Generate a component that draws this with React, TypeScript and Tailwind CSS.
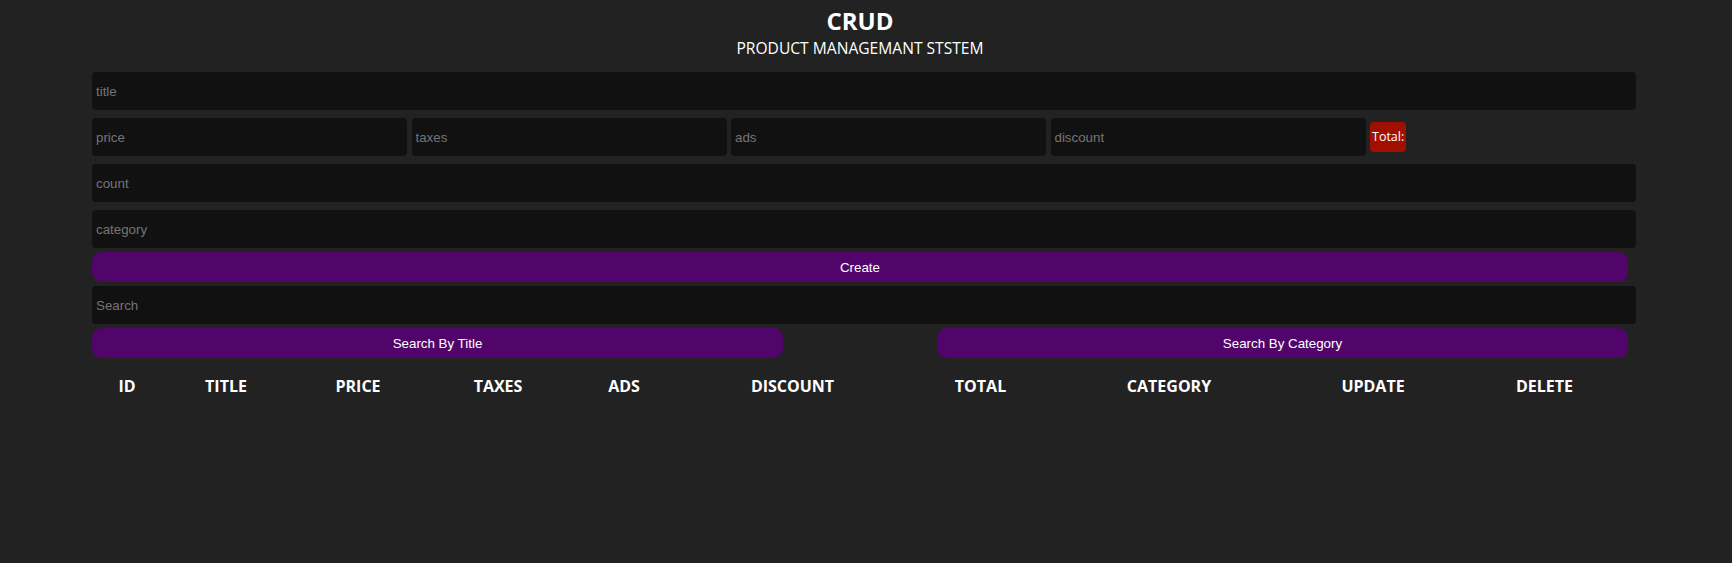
import React from "react";

const heads = ["ID", "TITLE", "PRICE", "TAXES", "ADS", "DISCOUNT", "TOTAL", "CATEGORY", "UPDATE", "DELETE"];

const inputCls =
  "h-[38px] rounded-[4px] bg-[#111111] px-[4px] text-[13.33px] text-white outline-none placeholder:text-[#757575] [font-family:'Liberation_Sans',Arial,sans-serif]";

const btnCls =
  "h-[30px] rounded-[10px] bg-[#51056b] pt-[1px] text-[13.33px] text-white [font-family:'Liberation_Sans',Arial,sans-serif]";

export default function App() {
  return (
    <div className="min-h-screen bg-[#222222] text-white [font-family:'Open_Sans',sans-serif]">
      <div className="ml-[92px] flex w-[1536px] flex-col">
        <div className="flex flex-col items-center pt-[5px]">
          <h2 className="text-[24px] font-bold leading-[32px]">CRUD</h2>
          <p className="mt-[1px] text-[15.6px] leading-[20px]">PRODUCT MANAGEMANT STSTEM</p>
        </div>

        <input className={`${inputCls} mt-[14px] w-[1544px]`} placeholder="title" />

        <div className="mt-[8px] flex h-[38px] items-center gap-[4.5px]">
          <input className={`${inputCls} w-[315px]`} placeholder="price" />
          <input className={`${inputCls} w-[315px]`} placeholder="taxes" />
          <input className={`${inputCls} w-[315px]`} placeholder="ads" />
          <input className={`${inputCls} w-[315px]`} placeholder="discount" />
          <span className="flex h-[30px] items-center rounded-[4px] bg-[#a00f00] px-[2px] text-[12.5px]">Total:</span>
        </div>

        <input className={`${inputCls} mt-[8px] w-[1544px]`} placeholder="count" />
        <input className={`${inputCls} mt-[8px] w-[1544px]`} placeholder="category" />

        <button className={`${btnCls} mt-[4px] w-[1536px]`}>Create</button>

        <input className={`${inputCls} mt-[4px] w-[1544px]`} placeholder="Search" />

        <div className="mt-[4px] flex justify-between">
          <button className={`${btnCls} w-[691px]`}>Search By Title</button>
          <button className={`${btnCls} w-[691px]`}>Search By Category</button>
        </div>

        <div className="mt-[18px] grid grid-cols-[70px_128px_136px_144px_108px_229px_147px_230px_178px_165px]">
          {heads.map((h) => (
            <div key={h} className="text-center text-[16px] font-bold leading-[20px]">
              {h}
            </div>
          ))}
        </div>
      </div>
    </div>
  );
}
